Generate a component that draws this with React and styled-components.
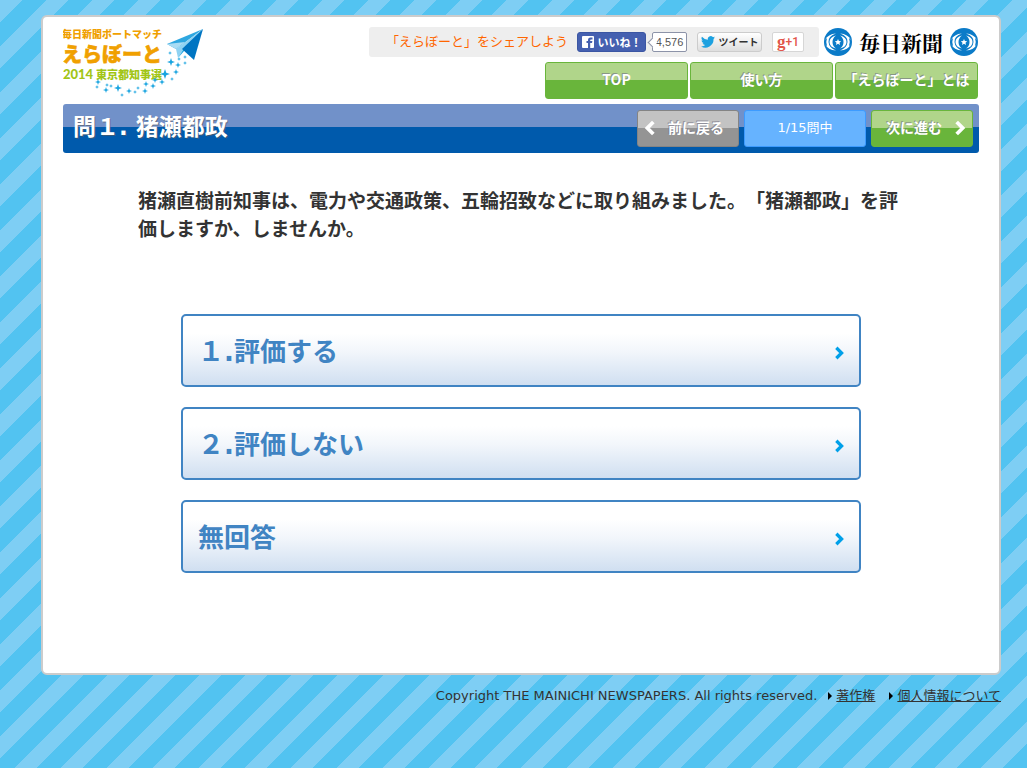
import styled, { createGlobalStyle } from 'styled-components';

const sans = '"DejaVu Sans", "Noto Sans CJK JP", sans-serif';
const jp = '"Noto Sans CJK JP", sans-serif';

const GlobalStyle = createGlobalStyle`
  * {
    box-sizing: border-box;
  }

  body {
    margin: 0;
    min-height: 100vh;
    color: #333;
    font-family: ${jp};
    font-size: 13px;
    text-spacing-trim: space-all;
    background: #52c3f1
      linear-gradient(135deg, #7ecef4 0 24%, #52c3f1 24% 50%, #7ecef4 50% 74%, #52c3f1 74%)
      0 0 / 46px 46px;
  }
`;

const Page = styled.div`
  padding: 15px 26px 0 41px;
`;

const Panel = styled.main`
  padding: 10px 20px 100px;
  border: 2px solid #ccc;
  border-radius: 6px;
  background: #fff;
`;

const Header = styled.header`
  display: flex;
  justify-content: space-between;
  align-items: flex-start;
  padding-right: 1px;
`;

const HomeLink = styled.a`
  display: block;
  height: 72px;
`;

const HeaderSide = styled.div`
  display: flex;
  flex-direction: column;
  align-items: flex-end;
  gap: 5px;
`;

const TopRow = styled.div`
  display: flex;
  align-items: center;
  gap: 5px;
`;

const ShareBar = styled.div`
  display: flex;
  align-items: center;
  width: 450px;
  height: 30px;
  padding-left: 17px;
  border-radius: 3px;
  background: #eee;
`;

const ShareLabel = styled.span`
  width: 191px;
  padding-bottom: 2px;
  color: #f60;
  font-size: 13px;
  line-height: 20px;
  white-space: nowrap;
`;

const SocialButton = styled.button`
  display: flex;
  align-items: center;
  justify-content: center;
  height: 20px;
  padding: 0;
  border: 1px solid #ccc;
  border-radius: 3px;
  font-family: ${jp};
  font-size: 11px;
  font-weight: bold;
  line-height: 16px;
  white-space: nowrap;
`;

const LikeButton = styled(SocialButton)`
  gap: 4px;
  width: 69px;
  border-color: #3b56a3;
  color: #fff;
  background: #4560b0;
`;

const LikeCount = styled.span`
  position: relative;
  width: 35px;
  height: 20px;
  margin: 0 10px 0 6px;
  border: 1px solid #8c93a8;
  border-radius: 2px;
  color: #555;
  background: #fff;
  font-family: "Liberation Sans", sans-serif;
  font-size: 11px;
  line-height: 18px;
  text-align: center;

  &::before {
    content: '';
    position: absolute;
    top: 6px;
    left: -4px;
    width: 6px;
    height: 6px;
    border: solid #8c93a8;
    border-width: 0 0 1px 1px;
    background: #fff;
    transform: rotate(45deg);
  }
`;

const TweetButton = styled(SocialButton)`
  gap: 4px;
  width: 65px;
  margin-right: 10px;
  color: #333;
  background: linear-gradient(#fff, #dedede);
  font-size: 10px;
`;

const PlusButton = styled(SocialButton)`
  width: 32px;
  border-color: #d6d6d6;
  border-radius: 2px;
  color: #e2564a;
  background: #fff;
  font-family: Roboto, sans-serif;
  font-size: 12px;
  font-weight: 500;

  b {
    font-family: "Liberation Serif", serif;
    font-size: 17px;
  }
`;

const Mainichi = styled.a`
  display: flex;
  align-items: center;
  gap: 7px;
  color: #000;
  font-family: "Noto Serif CJK JP", "Noto Sans CJK JP", serif;
  font-size: 21px;
  font-weight: bold;
  line-height: 28px;
  text-decoration: none;
`;

const Nav = styled.nav`
  display: flex;
  gap: 2px;
`;

const GlossLink = styled.a`
  display: flex;
  align-items: center;
  justify-content: ${(p) => p.$justify || 'center'};
  gap: 12px;
  width: ${(p) => p.$width}px;
  height: 37px;
  padding: 0 6px 3px;
  border: 1px solid ${(p) => (p.$gray ? '#848484' : '#69b53b')};
  border-radius: 3px;
  color: #fff;
  background: ${(p) =>
    p.$gray
      ? 'linear-gradient(#c3c3c3 0 17px, #949494 17px)'
      : 'linear-gradient(#b0d58a 0 17px, #69b53b 17px)'};
  font-family: ${jp};
  font-size: 14px;
  font-weight: bold;
  line-height: 20px;
  text-decoration: none;
  text-shadow: -1px -1px 0 rgba(110, 110, 130, 0.6);
  white-space: nowrap;

  svg {
    position: relative;
    top: 1px;
  }
`;

const TitleBar = styled.div`
  display: flex;
  justify-content: space-between;
  align-items: flex-start;
  height: 49px;
  margin-top: 5px;
  padding: 6px 6px 0 10px;
  border-radius: 3px;
  background: linear-gradient(#7191c9 0 23px, #005aac 23px);
`;

const Title = styled.h1`
  margin: 0;
  color: #fff;
  font-family: ${sans};
  font-size: 23px;
  line-height: 34px;
  text-shadow: 1px 1px 0 rgba(90, 90, 90, 0.6);
`;

const Steps = styled.div`
  display: flex;
  gap: 5px;
`;

const Progress = styled.span`
  width: 122px;
  height: 37px;
  border: 1px solid #3d9bff;
  border-radius: 3px;
  color: #fff;
  background: #66b3ff;
  font-family: ${sans};
  line-height: 34px;
  text-align: center;
`;

const Question = styled.p`
  margin: 33px 75px 72px;
  font-size: 19px;
  font-weight: bold;
  line-height: 28px;
`;

const Answers = styled.ul`
  display: grid;
  gap: 20px;
  margin: 0 118px;
  padding: 0;
  list-style: none;
`;

const Answer = styled.button`
  display: flex;
  align-items: center;
  justify-content: space-between;
  width: 100%;
  height: 73px;
  padding: 2px 15px 0;
  border: 2px solid #4084c3;
  border-radius: 5px;
  color: #4084c3;
  background: linear-gradient(#fff 25%, #f2f6fb 52%, #d0dff1);
  font-family: ${sans};
  font-size: 26px;
  font-weight: bold;
  line-height: 38px;

  svg {
    margin-top: 3px;
  }
`;

const Footer = styled.footer`
  display: flex;
  justify-content: flex-end;
  align-items: center;
  padding-top: 11px;
  font-family: ${sans};
  font-size: 13px;
  line-height: 20px;
`;

const FooterLink = styled.a`
  display: flex;
  align-items: center;
  gap: 4px;
  margin-left: ${(p) => p.$gap}px;
  color: #333;

  &::before {
    content: '';
    border: solid transparent;
    border-width: 4px 0 4px 4px;
    border-left-color: #000;
  }
`;

const sparkles = [
  [170, 53, 2], [179, 59, 2], [185, 57, 2], [171, 62, 4], [178, 65, 3],
  [185, 63, 2], [165, 74, 5], [176, 72, 3], [172, 79, 2], [162, 82, 3],
  [155, 80, 3], [153, 86, 3], [146, 84, 3], [145, 91, 3], [138, 88, 2],
  [135, 92, 2], [129, 91, 3], [122, 95, 2], [118, 88, 4], [111, 86, 2],
  [106, 90, 3], [107, 85, 2], [98, 82, 3], [97, 87, 2],
];

const star = ([x, y, r]) =>
  `M${x} ${y - r}l${r / 4} ${r * 0.75}l${r * 0.75} ${r / 4}l${-r * 0.75} ${r / 4}l${-r / 4} ${r * 0.75}l${-r / 4} ${-r * 0.75}l${-r * 0.75} ${-r / 4}l${r * 0.75} ${-r / 4}z`;

const Logo = () => (
  <svg width="142" height="72" viewBox="63 27 142 72" fontFamily="Lato, Noto Sans CJK JP, sans-serif" fontWeight="900">
    <g fill="#f0a000">
      <text x="62" y="38" fontSize="10">毎日新聞ボートマッチ</text>
      <text x="62" y="62" fontSize="20" stroke="#f0a000" strokeWidth="0.6">えらぼーと</text>
    </g>
    <g fill="#a2c517">
      <text x="63" y="79" fontSize="13">2014</text>
      <text x="96" y="79" fontSize="11">東京都知事選</text>
    </g>
    <path d={sparkles.map(star).join('')} fill="#18a4e0" />
    <path d="M203 29l-36 15 9 5z" fill="#2ea7e0" />
    <path d="M167 44l18-2-9 7z" fill="#a9dcf4" />
    <path d="M203 29l-27 20 2 9 5-8z" fill="#8fd2f2" />
    <path d="M203 29l-20 21-5 8z" fill="#18a4e0" />
    <path d="M203 29l-21 20 12 11z" fill="#0075c2" />
  </svg>
);

const Eye = () => (
  <svg width="28" height="28" viewBox="0 0 28 28">
    <circle cx="14" cy="14" r="14" fill="#0b7bc8" />
    <g fill="#fff">
      <path d="M1 12Q4 6 12 5.500 4 8 4.500 14T12 22.500Q4 22 1 16 2.500 18 3 18 1.500 14 3 10z" />
      <path d="M27 12Q24 6 16 5.500 24 8 23.500 14T16 22.500Q24 22 27 16 25.500 18 25 18 26.500 14 25 10z" />
      <path d="M12 7.500Q5.500 9 5.500 14T12 20.500Q8.500 18 8.500 14T12 7.500z" />
      <path d="M16 7.500Q22.500 9 22.500 14T16 20.500Q19.500 18 19.500 14T16 7.500z" />
      <path d="M14 11l.9 2.100 2.300.2-1.700 1.500.5 2.200-2-1.200-2 1.200.5-2.200-1.700-1.500 2.300-.2z" />
    </g>
  </svg>
);

const FacebookIcon = () => (
  <svg width="12" height="12" viewBox="0 0 12 12">
    <rect width="12" height="12" rx="1" fill="#fff" />
    <path d="M6 12V7H4.500V5H6V4Q6 1.500 8.500 1.500H10.500V3.500H9Q8.200 3.500 8.200 4.200V5h2.200L10 7H8.200v5z" fill="#4560b0" />
  </svg>
);

const TwitterIcon = () => (
  <svg width="14" height="12" viewBox="0 0 24 20">
    <path
      d="M24 2.400a10 10 0 0 1-2.800.8A5 5 0 0 0 23.300.400a10 10 0 0 1-3.100 1.200 4.900 4.900 0 0 0-8.400 4.500A14 14 0 0 1 1.700.900a4.900 4.900 0 0 0 1.500 6.600 5 5 0 0 1-2.200-.6c0 2.300 1.600 4.400 3.900 4.900a5 5 0 0 1-2.200.1 4.900 4.900 0 0 0 4.600 3.400A10 10 0 0 1 0 17.500 14 14 0 0 0 21.500 5z"
      fill="#1da1e0"
    />
  </svg>
);

const Chevron = ({ size = 16, color = '#fff', flip }) => (
  <svg width={size * 0.75} height={size} viewBox="0 0 9 12">
    <path
      d={flip ? 'M7 1.500L2.500 6l4.500 4.500' : 'M2 1.500L6.500 6l-4.500 4.500'}
      fill="none"
      stroke={color}
      strokeWidth="2.800"
    />
  </svg>
);

const navItems = ['TOP', '使い方', '「えらぼーと」とは'];
const answers = ['１.評価する', '２.評価しない', '無回答'];

const App = () => {
  return (
    <>
      <GlobalStyle />
      <Page>
        <Panel>
          <Header>
            <HomeLink href="#" aria-label="えらぼーと">
              <Logo />
            </HomeLink>
            <HeaderSide>
              <TopRow>
                <ShareBar>
                  <ShareLabel>「えらぼーと」をシェアしよう</ShareLabel>
                  <LikeButton>
                    <FacebookIcon />
                    いいね！
                  </LikeButton>
                  <LikeCount>4,576</LikeCount>
                  <TweetButton>
                    <TwitterIcon />
                    ツイート
                  </TweetButton>
                  <PlusButton>
                    <b>g</b>+1
                  </PlusButton>
                </ShareBar>
                <Mainichi href="#">
                  <Eye />
                  毎日新聞
                  <Eye />
                </Mainichi>
              </TopRow>
              <Nav>
                {navItems.map((item) => (
                  <GlossLink key={item} href="#" $width={143}>
                    {item}
                  </GlossLink>
                ))}
              </Nav>
            </HeaderSide>
          </Header>

          <TitleBar>
            <Title>問１. 猪瀬都政</Title>
            <Steps>
              <GlossLink href="#" $width={102} $justify="flex-start" $gray>
                <Chevron flip />
                前に戻る
              </GlossLink>
              <Progress>1/15問中</Progress>
              <GlossLink href="#" $width={102} $justify="flex-end">
                次に進む
                <Chevron />
              </GlossLink>
            </Steps>
          </TitleBar>

          <Question>
            猪瀬直樹前知事は、電力や交通政策、五輪招致などに取り組みました。「猪瀬都政」を評価しますか、しませんか。
          </Question>

          <Answers>
            {answers.map((answer) => (
              <li key={answer}>
                <Answer>
                  {answer}
                  <Chevron size={14} color="#00a0e9" />
                </Answer>
              </li>
            ))}
          </Answers>
        </Panel>

        <Footer>
          <span>Copyright THE MAINICHI NEWSPAPERS. All rights reserved.</span>
          <FooterLink href="#" $gap={11}>著作権</FooterLink>
          <FooterLink href="#" $gap={14}>個人情報について</FooterLink>
        </Footer>
      </Page>
    </>
  );
};

export default App;
